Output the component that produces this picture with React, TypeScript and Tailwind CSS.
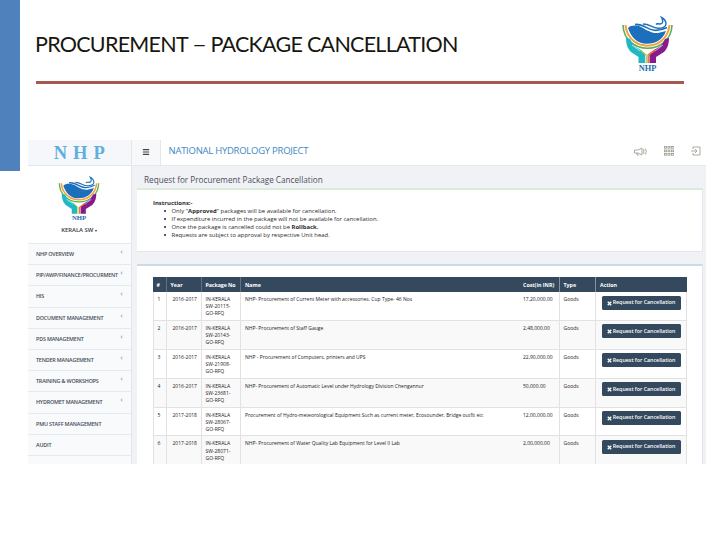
import { Menu } from "lucide-react";

const MENU_ITEMS = [
  { label: "NHP OVERVIEW", open: true },
  { label: "PIP/AWP/FINANCE/PROCURMENT", open: true },
  { label: "HIS", open: true },
  { label: "DOCUMENT MANAGEMENT", open: true },
  { label: "PDS MANAGEMENT", open: true },
  { label: "TENDER MANAGEMENT", open: true },
  { label: "TRAINING & WORKSHOPS", open: true },
  { label: "HYDROMET MANAGEMENT", open: true },
  { label: "PMU STAFF MANAGEMENT", open: false },
  { label: "AUDIT", open: false },
];

const PACKAGES = [
  { year: "2016-2017", no: "20115", name: "NHP- Procurement of Current Meter with accessories. Cup Type- 46 Nos", cost: "17,20,000.00" },
  { year: "2016-2017", no: "20143", name: "NHP- Procurement of Staff Gauge", cost: "2,48,000.00" },
  { year: "2016-2017", no: "21908", name: "NHP - Procurement of Computers, printers and UPS", cost: "22,90,000.00" },
  { year: "2016-2017", no: "23681", name: "NHP- Procurement of Automatic Level under Hydrology Division Chengannur", cost: "50,000.00" },
  { year: "2017-2018", no: "28067", name: "Procurement of Hydro-meteorological Equipment Such as current meter, Ecosounder, Bridge outfit etc", cost: "12,00,000.00" },
  { year: "2017-2018", no: "28071", name: "NHP- Procurement of Water Quality Lab Equipment for Level II Lab", cost: "2,00,000.00" },
];

const COLS = "grid grid-cols-[14px_35px_39.5px_278px_40.5px_36.5px_92px]";

function Logo({ className }: { className: string }) {
  return (
    <svg viewBox="0 0 55 56" className={className}>
      {/* rim of the bowl */}
      <path d="M3 9 C4 40 51 40 52 9" fill="none" stroke="#5fae57" strokeWidth="1.600" />
      <path d="M5.500 9 C8 36.500 47 36.500 49.500 9" fill="none" stroke="#f0a33c" strokeWidth="2" />
      {/* water */}
      <path d="M8 12 C11 9 17 9 21 11 C27 14 31 17.500 38 17 L46 15 C43 23.500 36 27.800 27 27.800 C17 27.800 11 21 8 12Z" fill="#1c6fbb" />
      <path d="M15 8.500 C23 7.500 27 13.500 34 14.300 C39 14.800 43 13.500 47 11.500" fill="none" stroke="#1c6fbb" strokeWidth="1.600" />
      <path d="M23 8 C30 8 32 12 38 12.200 C42 12.300 46 11 46 8 C46 5 44.500 3 41.500 1.500 C43.500 5 43 8 40 8 C38 8 37 7 36 8.500" fill="none" stroke="#1c6fbb" strokeWidth="1.400" />
      {/* hands */}
      <path d="M6 22 L10 23 L14 30 L21 34 L25 38 V47 H18.500 V41 L11 36 C7 32 6 27 6 22Z" fill="#1fb9c4" />
      <path d="M49 22 L45 23 L41 30 L34 34 L29.500 38 V47 H36 V41 L44 36 C48 32 49 27 49 22Z" fill="#861b8d" />
      <path d="M12 29 L20 35 M43 29 L35 35" stroke="#fff" strokeWidth="0.600" />
      <path d="M20 34 L26.200 39 V47" fill="none" stroke="#9ac94f" strokeWidth="1.200" />
      <path d="M35 34 L28.200 39 V47" fill="none" stroke="#ee7838" strokeWidth="1.600" />
      <text x="27.500" y="54.800" textAnchor="middle" fontFamily="Liberation Serif, serif" fontWeight="700" fontSize="8.400" fill="#1d6baa">
        NHP
      </text>
    </svg>
  );
}

function Sidebar() {
  return (
    <aside className="flex h-[324px] w-[103.500px] shrink-0 flex-col border-r border-[#e3e7ed] bg-[#f8fafb]">
      <div className="flex h-[26px] shrink-0 items-center justify-center gap-[6px] border-b border-[#e1e6ed] bg-[#f5f7fa] pt-[2px] font-['Liberation_Serif',serif] text-[18.500px] font-bold text-[#5fb0df]">
        <span>N</span>
        <span>H</span>
        <span>P</span>
      </div>
      <div className="flex h-[78px] shrink-0 flex-col items-center border-b border-[#e7ebef] bg-white pt-[10px]">
        <Logo className="h-[45px] w-[46px]" />
        <div className="mt-[5px] flex items-center gap-[2px] text-[5.900px] leading-[9px] font-semibold text-[#333a45]">
          KERALA SW <span className="mt-px border-x-[1.500px] border-t-[2px] border-x-transparent border-t-[#333]" />
        </div>
      </div>
      <nav className="overflow-hidden">
        {MENU_ITEMS.map((item) => (
          <div key={item.label} className="flex h-[21.200px] items-center justify-between border-b border-[#e6eaee] pr-[8px] pl-[8px] text-[5.400px] font-semibold text-[#434c56]">
            <span className="tracking-[-0.180px] whitespace-nowrap">{item.label}</span>
            {item.open && <span className="mb-[5px] text-[7px] leading-none font-normal text-[#777]">‹</span>}
          </div>
        ))}
      </nav>
    </aside>
  );
}

function TopBar() {
  return (
    <header className="flex h-[25.500px] shrink-0 border-b border-[#e6e9ee] bg-white">
      <div className="flex w-[29px] items-center justify-center border-r border-[#e3e7ed] bg-[#f6f8fa]">
        <Menu className="h-[8px] w-[8px] text-[#444]" strokeWidth={3.5} />
      </div>
      <h2 className="mt-[3px] ml-[8px] text-[9.500px] leading-[15px] tracking-[-0.260px] whitespace-nowrap text-[#4089c4]">NATIONAL HYDROLOGY PROJECT</h2>
      <div className="mr-[5px] ml-auto flex items-center gap-[17px] pb-[2px] text-[#a3a295]">
        <svg viewBox="0 0 13 9" className="h-[9px] w-[13px]" fill="none" stroke="currentColor" strokeWidth="0.900">
          <path d="M0.500 3 H4 L8 1 V8 L4 6 H0.500Z M3 6 V8 H5 M9.800 2 V7 M11.500 1.500 Q13 4.500 11.500 7.500" />
        </svg>
        <svg viewBox="0 0 10 10" className="h-[10px] w-[10px]" fill="none" stroke="currentColor" strokeWidth="0.900">
          {[1, 4.5, 8].map((y) =>
            [0.5, 4, 7.5].map((x) => <rect key={`${x}-${y}`} x={x} y={y - 0.5} width="2" height="1.700" />),
          )}
        </svg>
        <svg viewBox="0 0 10 10" className="h-[10px] w-[10px]" fill="none" stroke="currentColor" strokeWidth="0.900">
          <path d="M2 3 V1 H9 V9 H2 V7 M0 5 H6 M4 3 L6 5 L4 7" />
        </svg>
      </div>
    </header>
  );
}

function Instructions() {
  return (
    <section className="mr-[3px] ml-[5.500px] h-[64px] shrink-0 border-t-2 border-r border-b border-t-[#d9ecd7] border-r-[#e3e6ea] border-b-[#e3e6ea] bg-white pt-[9px] pl-[16px] text-[5.930px] leading-[8.100px] text-[#2b2b2b]">
      <p className="font-bold">Instructions:-</p>
      <ul className="whitespace-nowrap [&>li]:flex [&>li]:items-center [&>li]:pl-[10.500px] [&>li]:before:mr-[6px] [&>li]:before:h-[2px] [&>li]:before:w-[2px] [&>li]:before:rounded-full [&>li]:before:bg-[#222] [&>li]:before:content-['']">
        <li><span>Only "<b>Approved</b>" packages will be available for cancellation.</span></li>
        <li><span>If expenditure incurred in the package will not be available for cancellation.</span></li>
        <li><span>Once the package is cancelled could not be <b>Rollback.</b></span></li>
        <li><span>Requests are subject to approval by respective Unit head.</span></li>
      </ul>
    </section>
  );
}

function PackageTable() {
  return (
    <section className="mt-[12px] mr-[3px] ml-[5.500px] flex-1 overflow-hidden border-t-2 border-r border-t-[#cddbe8] border-r-[#dfe5ec] bg-white pt-[11px] pr-[15px] pl-[15.500px]">
      <div className={`${COLS} h-[15px] items-stretch bg-[#34495e] text-[5.300px] leading-[16px] font-bold text-white`}>
        <span className="border-r border-[#5f7183] pl-[4px]">#</span>
        <span className="border-r border-[#5f7183] pl-[4px]">Year</span>
        <span className="border-r border-[#5f7183] pl-[4px] tracking-[-0.080px] whitespace-nowrap">Package No</span>
        <span className="pl-[4px]">Name</span>
        <span className="border-r border-[#8492a0] pl-[4px] whitespace-nowrap">Cost(in INR)</span>
        <span className="border-r border-[#8492a0] pl-[4px]">Type</span>
        <span className="pl-[4px]">Action</span>
      </div>
      {PACKAGES.map((pkg, i) => (
        <div key={pkg.no} className={`${COLS} h-[28.900px] border-r border-b border-[#e2e2e2] text-[5px] leading-[7.200px] text-[#222] odd:bg-[#f9f9f9] even:bg-white`}>
          <span className="border-x border-[#e2e2e2] pt-[4px] pl-[4px]">{i + 1}</span>
          <span className="border-r border-[#e2e2e2] pt-[4px] pl-[6px]">{pkg.year}</span>
          <span className="border-r border-[#e2e2e2] pt-[4px] pl-[4px] whitespace-nowrap">
            IN-KERALA<br />SW-{pkg.no}-<br />GO-RFQ
          </span>
          <span className="pt-[4px] pl-[4px] whitespace-nowrap">{pkg.name}</span>
          <span className="border-r border-[#e2e2e2] pt-[4px] pl-[4px]">{pkg.cost}</span>
          <span className="border-r border-[#e2e2e2] pt-[4px] pl-[4px]">Goods</span>
          <div className="pt-[3.500px] pl-[5.500px]">
            <button className="flex h-[14px] w-[79px] items-center justify-center gap-px rounded-[1.500px] bg-[#34495e] text-[5.300px] font-semibold whitespace-nowrap text-white">
              <svg viewBox="0 0 10 10" className="mt-px h-[5px] w-[5px] shrink-0" fill="none" stroke="currentColor" strokeWidth="2.600">
                <path d="M1.500 1.500 L8.500 8.500 M8.500 1.500 L1.500 8.500" />
              </svg>
              Request for Cancellation
            </button>
          </div>
        </div>
      ))}
    </section>
  );
}

export default function App() {
  return (
    <div className="flex h-[540px] w-[720px] flex-col overflow-hidden bg-white font-['Open_Sans',sans-serif]">
      <div className="flex h-[140px] shrink-0">
        <div className="h-[171px] w-[20px] shrink-0 bg-[#4f81bd]" />
        <div className="ml-[16px] w-[648px]">
          <div className="flex h-[81px] justify-between">
            <h1 className="mt-[30px] ml-[-1px] font-[Lato,sans-serif] text-[21.500px] leading-[28px] tracking-[-0.740px] whitespace-nowrap text-[#17170f]">
              PROCUREMENT <span className="mr-[2px] inline-block origin-left scale-x-120">–</span> PACKAGE CANCELLATION
            </h1>
            <Logo className="mt-[16px] mr-[9px] h-[56px] w-[55px] shrink-0" />
          </div>
          <div className="h-[3px] bg-[#a95753]" />
        </div>
      </div>
      <div className="ml-[28px] flex h-[324px] w-[678px] shrink-0 overflow-hidden">
        <Sidebar />
        <main className="flex min-w-0 flex-1 flex-col bg-[#f0f2f5]">
          <TopBar />
          <h3 className="h-[22.500px] shrink-0 pt-[7px] pl-[12.500px] text-[8.180px] leading-[13px] whitespace-nowrap text-[#4c4f5e]">Request for Procurement Package Cancellation</h3>
          <Instructions />
          <PackageTable />
        </main>
      </div>
    </div>
  );
}
